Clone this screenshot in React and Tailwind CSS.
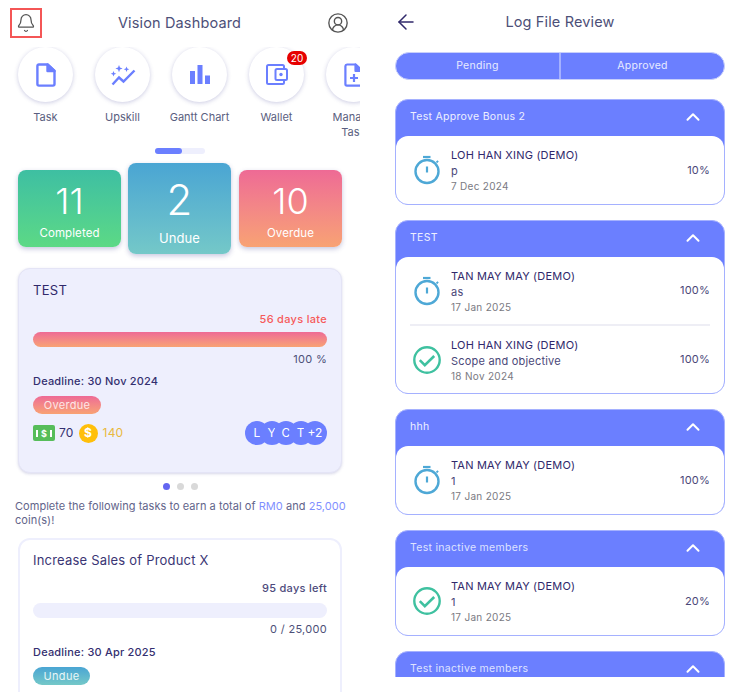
import React from "react";
import { ChevronUp, ArrowLeft, Bell, CircleUserRound } from "lucide-react";

const Stopwatch = () => (
  <svg width="28" height="30" viewBox="0 0 28 30" fill="none" stroke="#4ea8d6" strokeWidth="2.4" className="shrink-0">
    <path d="M10 2h7.5" strokeWidth="2.2" />
    <circle cx="14" cy="16.5" r="11.5" />
    <path d="M14 11.5v6" strokeWidth="2.2" />
    <path d="M23.5 7.5l1.6-1.6" strokeWidth="1.8" />
  </svg>
);
const Check = () => (
  <svg width="28" height="28" viewBox="0 0 28 28" fill="none" stroke="#3fc1a0" className="shrink-0">
    <circle cx="14" cy="14" r="12.7" strokeWidth="2.4" />
    <path d="M6.8 14.2l5 5 9.4-9.2" strokeWidth="2.6" />
  </svg>
);

const I = { fill: "#6b7fff" };
const TaskIcon = () => (
  <svg width="20" height="24" viewBox="0 0 20 24" fill="none" stroke="#6b7fff" strokeWidth="2.4" strokeLinejoin="round">
    <path d="M3 1.5h8.5L18.5 8v13a1.6 1.6 0 0 1-1.6 1.6H3A1.6 1.6 0 0 1 1.4 21V3A1.6 1.6 0 0 1 3 1.5z" />
    <path d="M11.5 1.5V8h7z" fill="#6b7fff" />
  </svg>
);
const UpskillIcon = () => (
  <svg width="26" height="22" viewBox="0 0 26 22" fill="none">
    <path d="M2.5 20.5l6.5-7 4.5 4L24.5 6.5" stroke="#6b7fff" strokeWidth="2.4" />
    <path d="M9 1l1 2.6 2.6 1-2.6 1-1 2.6-1-2.6-2.6-1 2.6-1z M16.5 2.5l.8 2 2 .8-2 .8-.8 2-.8-2-2-.8 2-.8z M3.5 7l.8 2 2 .8-2 .8-.8 2-.8-2-2-.8 2-.8z" {...I} />
  </svg>
);
const GanttIcon = () => (
  <svg width="20" height="19" viewBox="0 0 20 19" {...I}>
    <rect x="0" y="6" width="5" height="13" />
    <rect x="7.5" y="0" width="5" height="19" />
    <rect x="15" y="10.5" width="5" height="8.5" />
  </svg>
);
const WalletIcon = () => (
  <svg width="22" height="21" viewBox="0 0 22 21" fill="none" stroke="#6b7fff" strokeWidth="2">
    <path d="M18 5V2.5A1.5 1.5 0 0 0 16.5 1H2.5A1.5 1.5 0 0 0 1 2.5v16A1.5 1.5 0 0 0 2.5 20h14a1.5 1.5 0 0 0 1.5-1.5V16" />
    <rect x="9.5" y="5" width="11.5" height="11" rx="1.5" />
    <circle cx="15" cy="10.5" r="1.7" fill="#6b7fff" stroke="none" />
  </svg>
);
const ManageIcon = () => (
  <svg width="20" height="24" viewBox="0 0 20 24" fill="none" stroke="#6b7fff" strokeWidth="2.2" strokeLinejoin="round">
    <path d="M3 1.5h8.5L18.5 8v13a1.6 1.6 0 0 1-1.6 1.6H3A1.6 1.6 0 0 1 1.4 21V3A1.6 1.6 0 0 1 3 1.5z" />
    <path d="M11.5 1.5V8h7z" fill="#6b7fff" />
    <path d="M10 11v8M6 15h8" />
  </svg>
);

const shortcuts = [
  { label: "Task", icon: <TaskIcon /> },
  { label: "Upskill", icon: <UpskillIcon /> },
  { label: "Gantt Chart", icon: <GanttIcon /> },
  { label: "Wallet", icon: <WalletIcon />, badge: "20" },
  { label: "Manage Task", icon: <ManageIcon /> },
];

const Shortcut = ({ label, icon, badge }) => (
  <div className="relative w-[77px] shrink-0 flex flex-col items-center">
    <div className="relative w-[55px] h-[55px] rounded-full bg-white shadow-[0_1px_4px_rgba(70,70,150,0.28)] flex items-center justify-center">
      {icon}
      {badge && (
        <span className="absolute top-[4px] left-[38px] w-[20px] h-[14px] rounded-full bg-[#e60000] text-white text-[10px] leading-[14px] text-center">
          {badge}
        </span>
      )}
    </div>
    <div className="mt-[8px] w-[62px] text-center text-[11px] leading-[15px] text-[#5a5e80] whitespace-normal">
      {label}
    </div>
  </div>
);

const Stat = ({ n, label, big, cls }) => (
  <div
    className={`${big ? "w-[103px] h-[91px] text-[42px]" : "w-[103px] h-[77px] text-[36px]"} ${cls} rounded-[8px] text-white flex flex-col items-center shadow-[0_2px_5px_rgba(70,70,150,0.3)]`}
  >
    <div className={`${big ? "mt-[13px] leading-[48px]" : "mt-[11px] leading-[40px]"} font-light`}>{n}</div>
    <div className={`${big ? "mt-[6px] text-[13px]" : "mt-[4px] text-[11.5px]"} leading-[16px] tracking-[0.1px]`}>{label}</div>
  </div>
);

const OVERDUE = "bg-gradient-to-b from-[#ee6a95] to-[#f8a273]";
const UNDUE = "bg-gradient-to-b from-[#4aa5d3] to-[#74c8c8]";

const Group = ({ title, items, dim }) => (
  <div className="mb-[15px] rounded-[13px] bg-[#6b7fff] border border-[#a5b1ff]">
    <div className="h-[36px] pl-[14px] pr-[20px] pb-[2px] flex items-center justify-between">
      <span className={`text-[10.5px] tracking-[0.3px] ${dim ? "text-[#dfe3ff]" : "text-[#eef0ff]"}`}>{title}</span>
      <ChevronUp size={22} strokeWidth={2.2} className="text-white" />
    </div>
    <div className="bg-white rounded-[12px] px-[14px]">
      {items.map((it, i) => (
        <div
          key={i}
          className={`flex items-center ${items.length === 1 ? "h-[68px]" : i === 0 ? "h-[67px]" : "h-[69px] border-t-2 border-[#eeeef5]"}`}
        >
          <div className="w-[28px] ml-[3px] mr-[10px] flex justify-center">{it.done ? <Check /> : <Stopwatch />}</div>
          <div className="flex-1">
            <div className="text-[11px] leading-[16px] tracking-[0.2px] text-[#30296b]">{it.name}</div>
            <div className="text-[11px] leading-[16px] tracking-[0.2px] text-[#4a4778]">{it.desc}</div>
            <div className="text-[10px] leading-[14px] tracking-[0.3px] text-[#7a7a82]">{it.date}</div>
          </div>
          <div className="text-[11px] tracking-[0.2px] text-[#4a4778]">{it.pct}</div>
        </div>
      ))}
    </div>
  </div>
);

const Money = () => (
  <span className="w-[22px] h-[16px] rounded-[2px] bg-[#57bd5a] text-white flex items-center justify-around px-[1px] text-[9px] font-bold leading-none">
    <span className="w-[2px] h-[7px] bg-white" />
    <span>$</span>
    <span className="w-[2px] h-[7px] bg-white" />
  </span>
);

const Coin = () => (
  <span className="w-[19px] h-[19px] rounded-full bg-[#ffbf0a] text-white flex items-center justify-center text-[12px] font-bold leading-none">$</span>
);

export default function App() {
  return (
    <div className="w-[740px] h-[692px] overflow-hidden bg-white flex gap-[20px] font-['Inter','Noto_Sans',sans-serif]">
      <div className="w-[360px] h-[692px] overflow-hidden shrink-0">
        <div className="h-[45px] mb-[2px] grid grid-cols-[1fr_auto_1fr] items-center pl-[10px] pr-[11px]">
          <div className="w-[32px] h-[30px] border-[2px] border-[#f45656] flex items-center justify-center">
            <Bell size={20} strokeWidth={1.5} className="text-[#555]" />
          </div>
          <div className="text-[14.5px] tracking-[0.15px] text-[#4d5078]">Vision Dashboard</div>
          <CircleUserRound size={22} strokeWidth={1.5} className="text-[#555] justify-self-end" />
        </div>

        <div className="flex overflow-hidden pl-[7px] h-[100px]">
          {shortcuts.map((s) => (
            <Shortcut key={s.label} {...s} />
          ))}
        </div>

        <div className="w-[50px] h-[6px] rounded-full bg-[#eeeffd] ml-[155px] mt-[1px]">
          <div className="w-[27px] h-[6px] rounded-full bg-[#6b7fff]" />
        </div>

        <div className="flex items-center pl-[18px] gap-[7px] h-[91px] mt-[9px] pr-[18px]">
          <Stat n="11" label="Completed" cls="bg-gradient-to-b from-[#3ebfa2] to-[#5cd985]" />
          <Stat big n="2" label="Undue" cls={UNDUE} />
          <Stat n="10" label="Overdue" cls={`${OVERDUE} ml-px`} />
        </div>

        <div className="mx-[18px] mt-[14px] h-[205px] rounded-[12px] bg-[#eeeffd] border border-[#e4e4f6] shadow-[0_1px_3px_rgba(70,70,150,0.22)] px-[14px] pt-[12px]">
          <div className="text-[13px] leading-[18px] tracking-[0.3px] text-[#30296b]">TEST</div>
          <div className="mt-[12px] text-right text-[11px] leading-[16px] tracking-[0.3px] font-medium text-[#f65a5a]">56 days late</div>
          <div className={`mt-[5px] h-[15px] rounded-full ${OVERDUE}`} />
          <div className="mt-[4px] text-right text-[11px] leading-[16px] tracking-[0.3px] text-[#4d5078]">100 %</div>
          <div className="mt-[6px] text-[11px] leading-[16px] tracking-[0.2px] font-medium text-[#342f70]">Deadline: 30 Nov 2024</div>
          <span className={`mt-[7px] inline-block h-[18px] w-[68px] rounded-full text-center text-[11px] leading-[18px] tracking-[0.3px] text-[#fde6e6] ${OVERDUE}`}>Overdue</span>
          <div className="mt-[6px] flex items-center justify-between h-[24px]">
            <div className="flex items-center text-[12px] tracking-[0.2px]">
              <Money />
              <span className="ml-[4px] text-[#342f70]">70</span>
              <span className="ml-[5px]"><Coin /></span>
              <span className="ml-[5px] text-[#e9b93f]">140</span>
            </div>
            <div className="flex text-white text-[12px]">
              {["L", "Y", "C", "T", "+2"].map((c, i) => (
                <span key={c} className={`w-[24px] h-[24px] rounded-full bg-[#6b7fff] flex items-center justify-center ${i ? "-ml-[9.5px]" : ""}`}>
                  {c}
                </span>
              ))}
            </div>
          </div>
        </div>

        <div className="flex justify-center gap-[7px] mt-[10px]">
          <span className="w-[7px] h-[7px] rounded-full bg-[#6366f1]" />
          <span className="w-[7px] h-[7px] rounded-full bg-[#d9d9d9]" />
          <span className="w-[7px] h-[7px] rounded-full bg-[#d9d9d9]" />
        </div>

        <div className="mt-[9px] pl-[15px] text-[11px] leading-[14px] tracking-[0.04px] text-[#62648a]">
          Complete the following tasks to earn a total of <span className="text-[#7f8fff]">RM0</span> and <span className="text-[#7f8fff]">25,000</span> coin(s)!
        </div>

        <div className="mx-[18px] mt-[11px] h-[200px] rounded-[12px] bg-white border-2 border-[#eeeffd] px-[13px] pt-[11px]">
          <div className="text-[13px] leading-[18px] tracking-[0.2px] text-[#3a3574]">Increase Sales of Product X</div>
          <div className="mt-[11px] text-right text-[11px] leading-[16px] tracking-[0.3px] font-medium text-[#4d4a7c]">95 days left</div>
          <div className="mt-[7px] h-[15px] rounded-full bg-[#eeeffd]" />
          <div className="mt-[3px] text-right text-[11px] leading-[16px] tracking-[0.3px] text-[#4d5078]">0 / 25,000</div>
          <div className="mt-[7px] text-[11px] leading-[16px] tracking-[0.2px] font-medium text-[#342f70]">Deadline: 30 Apr 2025</div>
          <span className={`mt-[7px] inline-block h-[18px] w-[57px] rounded-full text-center text-[11px] leading-[18px] tracking-[0.3px] text-[#e8f6f8] ${UNDUE}`}>Undue</span>
        </div>
      </div>

      <div className="w-[360px] h-[677px] overflow-hidden shrink-0 px-[15px]">
        <div className="h-[52px] relative flex items-center justify-center -mt-[4px]">
          <ArrowLeft size={24} strokeWidth={1.5} className="absolute -left-[1px] text-[#30296b]" />
          <div className="text-[14.5px] tracking-[0.15px] text-[#4d5078]">Log File Review</div>
        </div>
        <div className="mt-[4px] h-[28px] rounded-full bg-[#6b7fff] border border-[#c8cffb] flex text-[10.5px] tracking-[0.3px] text-[#e8ebff]">
          <div className="flex-1 flex items-center justify-center border-r-2 border-[#a5b1ff]">Pending</div>
          <div className="flex-1 flex items-center justify-center">Approved</div>
        </div>
        <div className="mt-[19px]">
          <Group title="Test Approve Bonus 2" items={[{ name: "LOH HAN XING (DEMO)", desc: "p", date: "7 Dec 2024", pct: "10%" }]} />
          <Group
            title="TEST"
            items={[
              { name: "TAN MAY MAY (DEMO)", desc: "as", date: "17 Jan 2025", pct: "100%" },
              { name: "LOH HAN XING (DEMO)", desc: "Scope and objective", date: "18 Nov 2024", pct: "100%", done: true },
            ]}
          />
          <Group title="hhh" items={[{ name: "TAN MAY MAY (DEMO)", desc: "1", date: "17 Jan 2025", pct: "100%" }]} />
          <Group dim title="Test inactive members" items={[{ name: "TAN MAY MAY (DEMO)", desc: "1", date: "17 Jan 2025", pct: "20%", done: true }]} />
          <Group dim title="Test inactive members" items={[{ name: "TAN MAY MAY (DEMO)", desc: "1", date: "17 Jan 2025", pct: "20%", done: true }]} />
        </div>
      </div>
    </div>
  );
}
